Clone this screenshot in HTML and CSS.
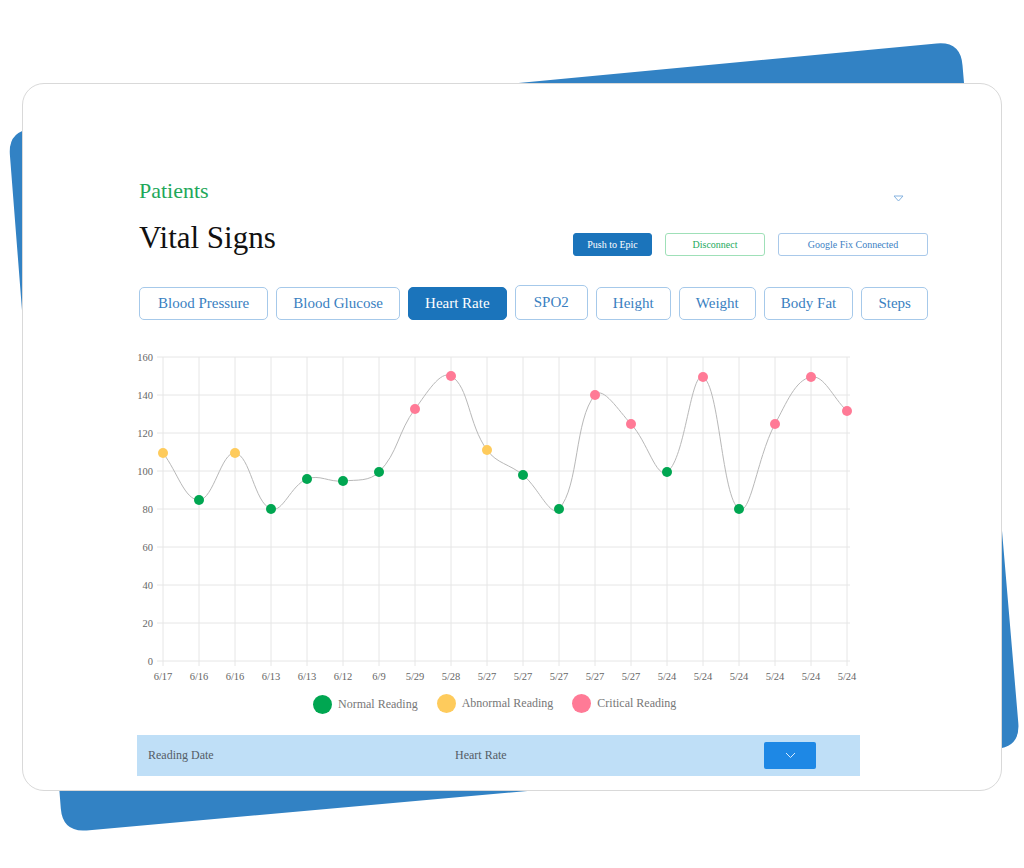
FILE: index.html
```html
<!DOCTYPE html>
<html lang="en">
<head>
<meta charset="utf-8">
<title>Vital Signs</title>
<link rel="stylesheet" href="styles.css">
</head>
<body>
<svg class="backdrop" width="1024" height="868" viewBox="0 0 1024 868" aria-hidden="true">
  <path class="backdrop-shape" d="M31.9,128.75 L936.6,43.55 Q960.5,41.3 962.5,65.2 L1018.3,722.9 Q1020.3,746.8 996.4,748.9 L86.6,830.4 Q62.7,832.5 60.8,808.6 L9.9,154.9 Q8,131 31.9,128.75 Z"/>
</svg>
<main class="card">
  <div class="top-row">
    <span class="crumb">Patients</span>
    <svg class="caret" width="11" height="7" viewBox="0 0 11 7"><path d="M1 1 L10 1 L5.5 6 Z"/></svg>
  </div>
  <div class="title-row">
    <h1 class="title">Vital Signs</h1>
    <div class="actions">
      <button class="btn btn-epic">Push to Epic</button>
      <button class="btn btn-disconnect">Disconnect</button>
      <button class="btn btn-google">Google Fix Connected</button>
    </div>
  </div>
  <nav class="tabs">
    <button class="tab tab-wide">Blood Pressure</button>
    <button class="tab">Blood Glucose</button>
    <button class="tab active">Heart Rate</button>
    <button class="tab tab-tall">SPO2</button>
    <button class="tab">Height</button>
    <button class="tab">Weight</button>
    <button class="tab">Body Fat</button>
    <button class="tab">Steps</button>
  </nav>
  <svg class="chart" width="730" height="340" viewBox="139 345 730 340">
    <g class="grid">
      <line x1="157" y1="357" x2="850" y2="357"/>
      <line x1="157" y1="395" x2="850" y2="395"/>
      <line x1="157" y1="433" x2="850" y2="433"/>
      <line x1="157" y1="471" x2="850" y2="471"/>
      <line x1="157" y1="509" x2="850" y2="509"/>
      <line x1="157" y1="547" x2="850" y2="547"/>
      <line x1="157" y1="585" x2="850" y2="585"/>
      <line x1="157" y1="623" x2="850" y2="623"/>
      <line x1="157" y1="661" x2="850" y2="661"/>
      <line x1="163" y1="357" x2="163" y2="666"/>
      <line x1="199" y1="357" x2="199" y2="666"/>
      <line x1="235" y1="357" x2="235" y2="666"/>
      <line x1="271" y1="357" x2="271" y2="666"/>
      <line x1="307" y1="357" x2="307" y2="666"/>
      <line x1="343" y1="357" x2="343" y2="666"/>
      <line x1="379" y1="357" x2="379" y2="666"/>
      <line x1="415" y1="357" x2="415" y2="666"/>
      <line x1="451" y1="357" x2="451" y2="666"/>
      <line x1="487" y1="357" x2="487" y2="666"/>
      <line x1="523" y1="357" x2="523" y2="666"/>
      <line x1="559" y1="357" x2="559" y2="666"/>
      <line x1="595" y1="357" x2="595" y2="666"/>
      <line x1="631" y1="357" x2="631" y2="666"/>
      <line x1="667" y1="357" x2="667" y2="666"/>
      <line x1="703" y1="357" x2="703" y2="666"/>
      <line x1="739" y1="357" x2="739" y2="666"/>
      <line x1="775" y1="357" x2="775" y2="666"/>
      <line x1="811" y1="357" x2="811" y2="666"/>
      <line x1="847" y1="357" x2="847" y2="666"/>
    </g>
    <g class="y-labels">
      <text x="153" y="360.5">160</text>
      <text x="153" y="398.5">140</text>
      <text x="153" y="436.5">120</text>
      <text x="153" y="474.5">100</text>
      <text x="153" y="512.5">80</text>
      <text x="153" y="550.5">60</text>
      <text x="153" y="588.5">40</text>
      <text x="153" y="626.5">20</text>
      <text x="153" y="664.5">0</text>
    </g>
    <g class="x-labels">
      <text x="163" y="680">6/17</text>
      <text x="199" y="680">6/16</text>
      <text x="235" y="680">6/16</text>
      <text x="271" y="680">6/13</text>
      <text x="307" y="680">6/13</text>
      <text x="343" y="680">6/12</text>
      <text x="379" y="680">6/9</text>
      <text x="415" y="680">5/29</text>
      <text x="451" y="680">5/28</text>
      <text x="487" y="680">5/27</text>
      <text x="523" y="680">5/27</text>
      <text x="559" y="680">5/27</text>
      <text x="595" y="680">5/27</text>
      <text x="631" y="680">5/27</text>
      <text x="667" y="680">5/24</text>
      <text x="703" y="680">5/24</text>
      <text x="739" y="680">5/24</text>
      <text x="775" y="680">5/24</text>
      <text x="811" y="680">5/24</text>
      <text x="847" y="680">5/24</text>
    </g>
    <path class="trend" d="M163,453 C177.4,471.8 184.6,500 199,500 C213.4,500 221.45,451.3 235,453 C250.25,454.9 254.1,502.9 271,509 C282.9,513.3 290.7,485.3 307,479 C319.5,474.1 328.8,482.4 343,481 C357.6,479.6 369.3,481.7 379,472 C398.1,452.9 397.8,432 415,409 C426.6,393.6 440.3,369.9 451,376 C469.1,386.3 468.2,424.2 487,450 C497,463.8 509.5,463.9 523,475 C538.3,487.5 550.6,518.4 559,509 C579.4,486.4 574.2,419.5 595,395 C603,385.5 618.5,410.6 631,424 C647.3,441.4 656.3,479 667,472 C685.1,460.2 690.7,370.7 703,377 C719.5,385.5 721.8,497.8 739,509 C750.6,516.6 757.5,456.2 775,424 C786.3,403.4 795.3,379.8 811,377 C824.1,374.6 832.6,397.4 847,411"/>
    <g class="points">
      <circle class="pt-abnormal" cx="163" cy="453" r="5"/>
      <circle class="pt-normal" cx="199" cy="500" r="5"/>
      <circle class="pt-abnormal" cx="235" cy="453" r="5"/>
      <circle class="pt-normal" cx="271" cy="509" r="5"/>
      <circle class="pt-normal" cx="307" cy="479" r="5"/>
      <circle class="pt-normal" cx="343" cy="481" r="5"/>
      <circle class="pt-normal" cx="379" cy="472" r="5"/>
      <circle class="pt-critical" cx="415" cy="409" r="5"/>
      <circle class="pt-critical" cx="451" cy="376" r="5"/>
      <circle class="pt-abnormal" cx="487" cy="450" r="5"/>
      <circle class="pt-normal" cx="523" cy="475" r="5"/>
      <circle class="pt-normal" cx="559" cy="509" r="5"/>
      <circle class="pt-critical" cx="595" cy="395" r="5"/>
      <circle class="pt-critical" cx="631" cy="424" r="5"/>
      <circle class="pt-normal" cx="667" cy="472" r="5"/>
      <circle class="pt-critical" cx="703" cy="377" r="5"/>
      <circle class="pt-normal" cx="739" cy="509" r="5"/>
      <circle class="pt-critical" cx="775" cy="424" r="5"/>
      <circle class="pt-critical" cx="811" cy="377" r="5"/>
      <circle class="pt-critical" cx="847" cy="411" r="5"/>
    </g>
  </svg>
  <div class="legend">
    <span class="legend-item"><span class="dot dot-normal"></span>Normal Reading</span>
    <span class="legend-item legend-up"><span class="dot dot-abnormal"></span>Abnormal Reading</span>
    <span class="legend-item legend-up"><span class="dot dot-critical"></span>Critical Reading</span>
  </div>
  <div class="table-head">
    <span class="col-date">Reading Date</span>
    <span class="col-rate">Heart Rate</span>
    <button class="head-btn" aria-label="Expand"><svg width="11" height="7" viewBox="0 0 11 7"><path d="M1 1 L5.5 5.5 L10 1"/></svg></button>
  </div>
</main>
</body>
</html>
```
FILE: styles.css
```css
* {
  box-sizing: border-box;
}

html, body {
  margin: 0;
  padding: 0;
}

body {
  width: 1024px;
  height: 868px;
  overflow: hidden;
  position: relative;
  background: #ffffff;
  font-family: "Liberation Serif", "Times New Roman", serif;
  color: #111;
}

.backdrop {
  position: absolute;
  left: 0;
  top: 0;
  z-index: 0;
}

.backdrop-shape {
  fill: #3282c4;
}

.card {
  position: relative;
  z-index: 1;
  margin: 83px 0 0 22px;
  width: 980px;
  height: 708px;
  background: #ffffff;
  border: 1px solid #d9d9d9;
  border-radius: 22px;
  padding: 94px 73px 0 116px;
}

.top-row {
  display: flex;
  justify-content: space-between;
  align-items: flex-start;
  height: 26px;
}

.crumb {
  font-size: 22px;
  line-height: 26px;
  color: #1ea85a;
}

.caret {
  margin-top: 17px;
  margin-right: 24px;
}

.caret path {
  fill: none;
  stroke: #86b3e0;
  stroke-width: 1;
}

.title-row {
  display: flex;
  justify-content: space-between;
  align-items: flex-end;
  margin-top: 16px;
}

.title {
  margin: 0;
  font-size: 31px;
  line-height: 36px;
  font-weight: normal;
  color: #111;
}

.actions {
  display: flex;
  gap: 13px;
}

.btn {
  height: 23px;
  padding: 0;
  font-family: inherit;
  font-size: 10px;
  border-radius: 3px;
  background: #ffffff;
  border: 1px solid;
  cursor: pointer;
}

.btn-epic {
  width: 79px;
  background: #1b74bb;
  border-color: #1b74bb;
  color: #ffffff;
}

.btn-disconnect {
  width: 100px;
  border-color: #9fe0b8;
  color: #25aa5e;
}

.btn-google {
  width: 150px;
  border-color: #a9c9ea;
  color: #3d7fc4;
}

.tabs {
  display: flex;
  justify-content: space-between;
  align-items: flex-end;
  margin-top: 29px;
}

.tab {
  height: 33px;
  padding: 0 16px;
  font-family: inherit;
  font-size: 15px;
  color: #3a7fc1;
  background: #ffffff;
  border: 1px solid #a6c9ea;
  border-radius: 5px;
  cursor: pointer;
}

.tab-wide {
  padding: 0 18px;
}

.tab-tall {
  height: 35px;
  padding: 0 18px;
}

.tab.active {
  background: #1b74bb;
  border-color: #1b74bb;
  color: #ffffff;
}

.chart {
  display: block;
  margin-top: 25px;
  overflow: visible;
}

.grid line {
  stroke: #e6e6e6;
  stroke-width: 1;
}

.y-labels text,
.x-labels text {
  font-family: "Liberation Serif", serif;
  font-size: 10.5px;
  fill: #666666;
}

.y-labels text {
  text-anchor: end;
}

.x-labels text {
  text-anchor: middle;
}

.trend {
  fill: none;
  stroke: #b8b8b8;
  stroke-width: 1;
}

.pt-normal { fill: #00a651; }
.pt-abnormal { fill: #fecb5c; }
.pt-critical { fill: #ff7a96; }

.legend {
  display: flex;
  align-items: center;
  gap: 19px;
  margin-top: 10px;
  padding-left: 174px;
  height: 19px;
}

.legend-item {
  display: flex;
  align-items: center;
  gap: 6px;
  font-size: 12px;
  color: #777777;
}

.legend-item.legend-up {
  position: relative;
  top: -1px;
}

.dot {
  width: 19px;
  height: 19px;
  border-radius: 50%;
}

.dot-normal { background: #00a651; }
.dot-abnormal { background: #fecb5c; }
.dot-critical { background: #ff7a96; }

.table-head {
  display: flex;
  align-items: center;
  margin-top: 21px;
  margin-left: -2px;
  width: 723px;
  height: 41px;
  padding-left: 11px;
  background: #bfdff7;
  font-size: 12px;
  color: #555d66;
}

.col-date {
  width: 307px;
}

.col-rate {
  width: 309px;
}

.head-btn {
  width: 52px;
  height: 27px;
  padding: 0;
  border: none;
  border-radius: 2px;
  background: #1e88e5;
  display: flex;
  align-items: center;
  justify-content: center;
  cursor: pointer;
}

.head-btn path {
  fill: none;
  stroke: #d8ecff;
  stroke-width: 1;
}
```
